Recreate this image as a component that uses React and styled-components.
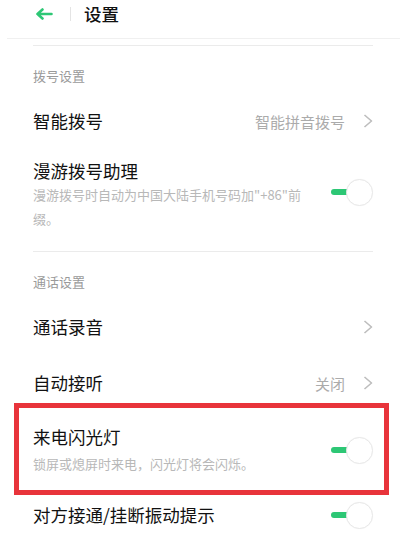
import styled, { createGlobalStyle } from "styled-components";

const GlobalStyle = createGlobalStyle`
  html, body {
    margin: 0;
    padding: 0;
    background: #ffffff;
  }
  body {
    font-family: "Noto Sans CJK SC", "Noto Sans", sans-serif;
  }
`;

const Page = styled.div`
  width: 400px;
  height: 538px;
  overflow: hidden;
  background: #ffffff;
`;

const Header = styled.div`
  height: 28px;
  padding-bottom: 10px;
  margin-left: 7px;
  display: flex;
  align-items: center;
  padding-left: 28px;
  border-bottom: 1px solid #f0f0f0;
`;

const BackButton = styled.div`
  width: 18px;
  height: 12px;
  display: flex;
  align-items: center;
`;

const HeaderDivider = styled.div`
  width: 1px;
  height: 14px;
  background: #e4e4e4;
  margin: 0 13px 0 17px;
`;

const HeaderTitle = styled.div`
  font-size: 17.5px;
  font-weight: 500;
  line-height: 24px;
  color: #111111;
`;

const List = styled.div`
  padding: 6px 27px 0 33px;
`;

const Divider = styled.div`
  height: 1px;
  background: #ebebeb;
`;

const SectionTitle = styled.div`
  padding: 21px 0 8px;
  font-size: 13px;
  line-height: 18px;
  color: #9a9a9a;
`;

const Row = styled.div`
  display: flex;
  align-items: center;
  justify-content: space-between;
  min-height: ${(p) => p.$h || 56}px;
  padding: ${(p) => p.$pad || "0"};
  box-sizing: border-box;
`;

const TextBlock = styled.div`
  display: flex;
  flex-direction: column;
  max-width: 272px;
`;

const Title = styled.div`
  font-size: 17.5px;
  line-height: 24px;
  color: #111111;
`;

const Subtitle = styled.div`
  font-size: 13px;
  line-height: 24px;
  color: #b8b8b8;
  margin-top: ${(p) => p.$mt || 0}px;
`;

const Trailing = styled.div`
  display: flex;
  align-items: center;
  gap: 18px;
  margin-top: ${(p) => p.$mt || 0}px;
`;

const Value = styled.span`
  font-size: 15px;
  color: #ababab;
`;

const Toggle = styled.div`
  position: relative;
  width: 42px;
  height: 27px;
  flex-shrink: 0;
`;

const Track = styled.div`
  position: absolute;
  left: 0;
  top: 10.5px;
  width: 28px;
  height: 6px;
  border-radius: 3px;
  background: #2dc775;
`;

const Knob = styled.div`
  position: absolute;
  right: 0;
  top: 0;
  width: 25px;
  height: 25px;
  border-radius: 50%;
  background: #ffffff;
  border: 1px solid #e8e8e8;
  box-shadow: 0 0 1px rgba(0, 0, 0, 0.05);
`;

const Highlight = styled.div`
  margin: -8px -16px 0 -19px;
  padding: 14px 11px 12px 14px;
  border: 5px solid #e8343b;
`;

const BackArrow = () => (
  <svg width="18" height="12" viewBox="0 0 18 12" fill="none">
    <path
      d="M2.5 6H16.5M7.5 1.5L2.5 6L7.5 10.5"
      stroke="#2dc775"
      strokeWidth="2.6"
      strokeLinecap="round"
      strokeLinejoin="round"
    />
  </svg>
);

const Chevron = () => (
  <svg width="10" height="14" viewBox="0 0 10 14" fill="none">
    <path d="M1.5 1L8.5 7L1.5 13" stroke="#bdbdbd" strokeWidth="1.6" strokeLinejoin="round" />
  </svg>
);

const Switch = ({ mt }) => (
  <Trailing $mt={mt}>
    <Toggle>
      <Track />
      <Knob />
    </Toggle>
  </Trailing>
);

const App = () => {
  return (
    <Page>
      <GlobalStyle />
      <Header>
        <BackButton>
          <BackArrow />
        </BackButton>
        <HeaderDivider />
        <HeaderTitle>设置</HeaderTitle>
      </Header>
      <List>
        <Divider />
        <SectionTitle>拨号设置</SectionTitle>
        <Row>
          <Title>智能拨号</Title>
          <Trailing>
            <Value>智能拼音拨号</Value>
            <Chevron />
          </Trailing>
        </Row>
        <Row $pad="10px 0 20px">
          <TextBlock>
            <Title>漫游拨号助理</Title>
            <Subtitle>漫游拨号时自动为中国大陆手机号码加"+86"前缀。</Subtitle>
          </TextBlock>
          <Switch mt={-6} />
        </Row>
        <Divider />
        <SectionTitle>通话设置</SectionTitle>
        <Row>
          <Title>通话录音</Title>
          <Trailing>
            <Chevron />
          </Trailing>
        </Row>
        <Row>
          <Title>自动接听</Title>
          <Trailing>
            <Value>关闭</Value>
            <Chevron />
          </Trailing>
        </Row>
        <Highlight>
          <Row $h={0}>
            <TextBlock>
              <Title>来电闪光灯</Title>
              <Subtitle $mt={3}>锁屏或熄屏时来电，闪光灯将会闪烁。</Subtitle>
            </TextBlock>
            <Switch />
          </Row>
        </Highlight>
        <Row $h={40}>
          <Title>对方接通/挂断振动提示</Title>
          <Switch />
        </Row>
      </List>
    </Page>
  );
};

export default App;
